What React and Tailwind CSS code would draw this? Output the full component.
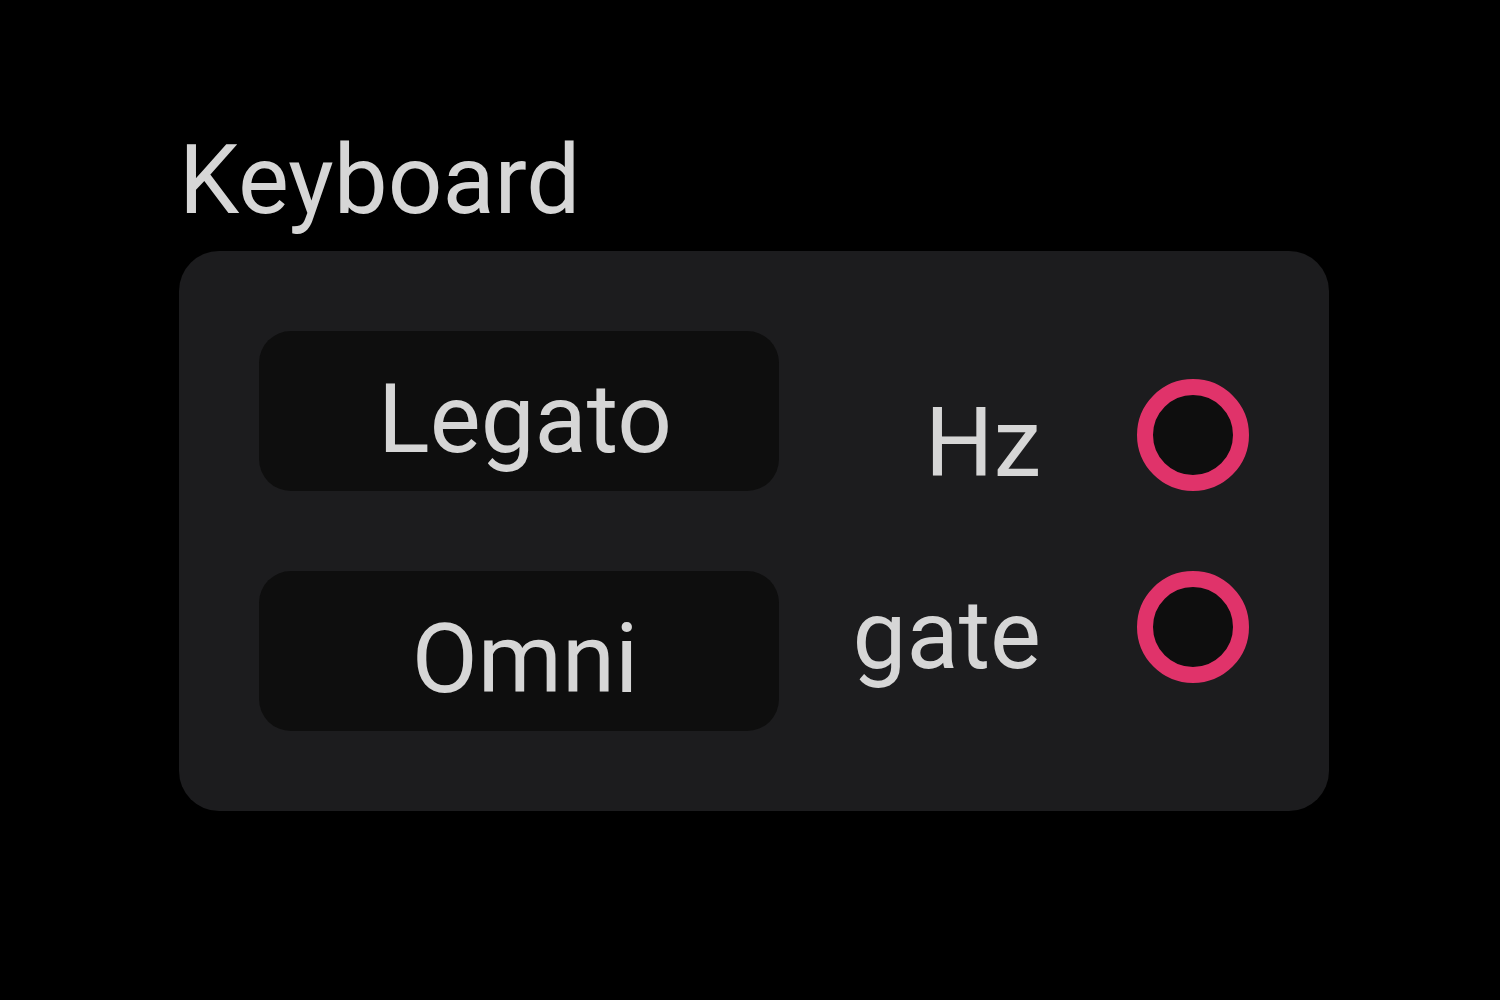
const font = { fontFamily: 'Roboto, "Noto Sans", sans-serif' };

function ModeButton({ label }) {
  return (
    <div className="flex h-[160px] w-[520px] items-center justify-center rounded-[32px] bg-[#0e0e0e] pt-[16px] pl-[12px]">
      <span className="text-[96px] leading-none text-[#d6d6d6]">{label}</span>
    </div>
  );
}

function Output({ label }) {
  return (
    <div className="flex h-[112px] items-center justify-end gap-[96px]">
      <span className="pt-[16px] text-[96px] leading-none text-[#d6d6d6]">{label}</span>
      <div className="h-[112px] w-[112px] rounded-full border-[16px] border-[#e0336a] bg-[#0e0e0e]" />
    </div>
  );
}

export default function App() {
  return (
    <div className="min-h-[1000px] bg-black pt-[132px] pl-[179px]" style={font}>
      <div className="w-[1150px]">
        <h1 className="mb-[23px] text-[96px] leading-none font-normal text-[#d6d6d6]">Keyboard</h1>
        <div className="flex rounded-[40px] bg-[#1c1c1e] p-[80px]">
          <div className="flex flex-col gap-[80px]">
            <ModeButton label="Legato" />
            <ModeButton label="Omni" />
          </div>
          <div className="flex flex-1 flex-col justify-center gap-[80px]">
            <Output label="Hz" />
            <Output label="gate" />
          </div>
        </div>
      </div>
    </div>
  );
}
